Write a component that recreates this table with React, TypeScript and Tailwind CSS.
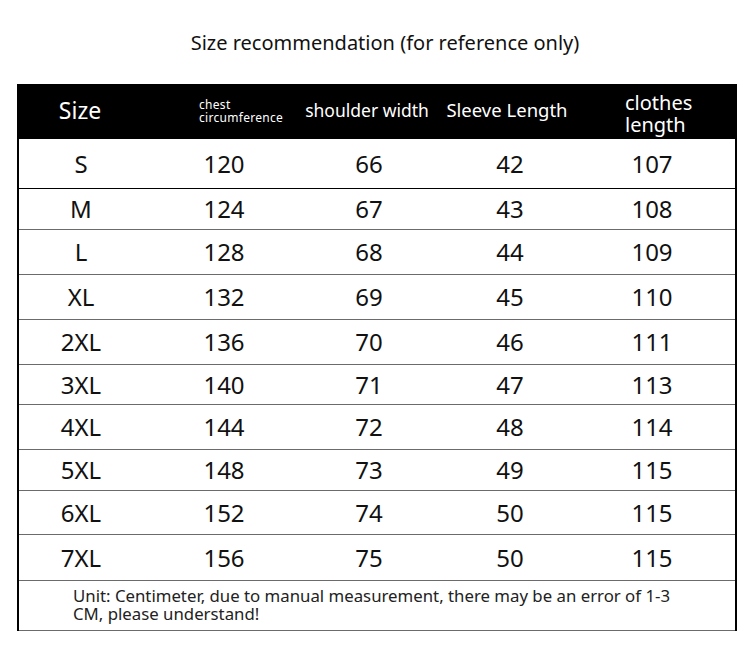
const rows = [
  { size: 'S', chest: 120, shoulder: 66, sleeve: 42, length: 107, h: 'h-[50px]', line: 'border-black' },
  { size: 'M', chest: 124, shoulder: 67, sleeve: 43, length: 108, h: 'h-[41px]', line: 'border-[#6b6b6b]' },
  { size: 'L', chest: 128, shoulder: 68, sleeve: 44, length: 109, h: 'h-[45px]', line: 'border-[#6b6b6b]' },
  { size: 'XL', chest: 132, shoulder: 69, sleeve: 45, length: 110, h: 'h-[45px]', line: 'border-[#6b6b6b]' },
  { size: '2XL', chest: 136, shoulder: 70, sleeve: 46, length: 111, h: 'h-[45px]', line: 'border-[#6b6b6b]' },
  { size: '3XL', chest: 140, shoulder: 71, sleeve: 47, length: 113, h: 'h-[40px]', line: 'border-[#6b6b6b]' },
  { size: '4XL', chest: 144, shoulder: 72, sleeve: 48, length: 114, h: 'h-[45px]', line: 'border-[#6b6b6b]' },
  { size: '5XL', chest: 148, shoulder: 73, sleeve: 49, length: 115, h: 'h-[41px]', line: 'border-[#6b6b6b]' },
  { size: '6XL', chest: 152, shoulder: 74, sleeve: 50, length: 115, h: 'h-[44px]', line: 'border-[#6b6b6b]' },
  { size: '7XL', chest: 156, shoulder: 75, sleeve: 50, length: 115, h: 'h-[46px]', line: 'border-[#6b6b6b]' },
];

const cols = 'grid grid-cols-[126px_158px_132px_150px_1fr]';

export default function App() {
  return (
    <div className="w-[750px] h-[651px] bg-white text-black font-['Noto_Sans',sans-serif] overflow-hidden">
      <div className="h-[84px] pt-[29px] text-center text-[20px] leading-[27px] text-[#111] pl-[20px]">
        Size recommendation (for reference only)
      </div>

      <div className="mx-[17px] w-[720px] border-l-2 border-r-2 border-black">
        {/* header */}
        <div className={`${cols} h-[55px] bg-black text-white items-center pb-[6px]`}>
          <div className="text-center text-[23px] pr-[4px]">Size</div>
          <div className="pl-[54px] text-[12px] leading-[13px] tracking-[0.3px] pt-[2px]">
            <div>chest</div>
            <div>circumference</div>
          </div>
          <div className="text-center text-[17.5px] whitespace-nowrap -ml-[4px]">shoulder width</div>
          <div className="text-center text-[18.5px] whitespace-nowrap -ml-[6px]">Sleeve Length</div>
          <div className="pl-[40px] text-[20px] leading-[22px] mt-[8px]">
            <div>clothes</div>
            <div>length</div>
          </div>
        </div>

        {rows.map((r) => (
          <div key={r.size} className={`${cols} ${r.h} items-center border-b ${r.line} text-[24px] text-[#111]`}>
            <div className="text-center pr-[2px]">{r.size}</div>
            <div className="text-center">{r.chest}</div>
            <div className="text-center">{r.shoulder}</div>
            <div className="text-center">{r.sleeve}</div>
            <div className="text-center pr-[16px]">{r.length}</div>
          </div>
        ))}

        {/* footer note */}
        <div className="h-[50px] border-b border-[#6b6b6b] pl-[54px] pr-[40px] pt-[6px] text-[16.8px] leading-[18px] text-[#222]">
          Unit: Centimeter, due to manual measurement, there may be an error of 1-3 CM, please understand!
        </div>
      </div>
    </div>
  );
}
